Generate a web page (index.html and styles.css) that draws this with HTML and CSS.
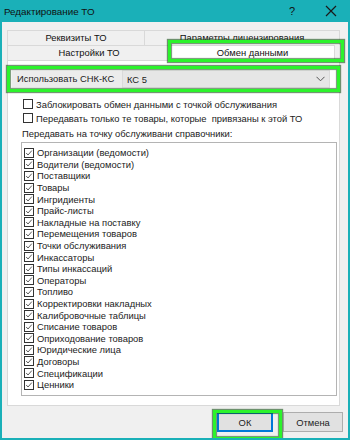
FILE: index.html
```html
<!DOCTYPE html>
<html lang="ru">
<head>
    <meta charset="UTF-8">
    <title>Редактирование ТО</title>
    <link rel="stylesheet" href="styles.css">
</head>
<body>
    <div class="window">
        <div class="titlebar">
            <span class="title">Редактирование ТО</span>
            <span class="help">?</span>
            <svg class="close" width="12" height="12" viewBox="0 0 12 12">
                <path d="M1 1 L11 11 M11 1 L1 11" stroke="#1a1a1a" stroke-width="1.2" fill="none"/>
            </svg>
        </div>

        <div class="content">
            <div class="tabs">
                <div class="tab-row">
                    <div class="tab tab-req">Реквизиты ТО</div>
                    <div class="tab tab-lic">Параметры лицензирования</div>
                </div>
                <div class="tab-row">
                    <div class="tab tab-set">Настройки ТО</div>
                    <div class="tab tab-active">Обмен данными</div>
                </div>
            </div>

            <div class="panel">
                <div class="combo-row">
                    <span class="combo-label">Использовать СНК-КС</span>
                    <div class="combo">
                        <span>КС 5</span>
                        <svg width="9" height="6" viewBox="0 0 9 6">
                            <path d="M0.5 0.8 L4.5 4.8 L8.5 0.8" stroke="#555" stroke-width="1" fill="none"/>
                        </svg>
                    </div>
                </div>

                <div class="option"><span class="cb"></span>Заблокировать обмен данными с точкой обслуживания</div>
                <div class="option"><span class="cb"></span>Передавать только те товары, которые&nbsp; привязаны к этой ТО</div>

                <div class="list-title">Передавать на точку обслуживани справочники:</div>

                <div class="listbox" id="listbox"></div>
            </div>

            <div class="buttons">
                <button class="btn btn-default">ОК</button>
                <button class="btn">Отмена</button>
            </div>
        </div>

        <div class="mark mark-tab"></div>
        <div class="mark mark-combo"></div>
        <div class="mark mark-ok"></div>
    </div>

    <script>
        const items = [
            'Организации (ведомости)',
            'Водители (ведомости)',
            'Поставщики',
            'Товары',
            'Ингридиенты',
            'Прайс-листы',
            'Накладные на поставку',
            'Перемещения товаров',
            'Точки обслуживания',
            'Инкассаторы',
            'Типы инкассаций',
            'Операторы',
            'Топливо',
            'Корректировки накладных',
            'Калибровочные таблицы',
            'Списание товаров',
            'Оприходование товаров',
            'Юридические лица',
            'Договоры',
            'Спецификации',
            'Ценники'
        ];

        const tick = '<svg width="10" height="10" viewBox="0 0 10 10"><path d="M1.5 5 L3.8 7.5 L8.5 2" stroke="#333" stroke-width="1" fill="none"/></svg>';
        const listbox = document.getElementById('listbox');

        items.forEach(name => {
            listbox.innerHTML += `<div class="item"><span class="cb">${tick}</span>${name}</div>`;
        });
    </script>
</body>
</html>
```

FILE: styles.css
```css
* {
    box-sizing: border-box;
}
body {
    margin: 0;
    font-family: "Liberation Sans", Arial, sans-serif;
    font-size: 9.4px;
    color: #000;
    background-color: #f0f0f0;
}
.window {
    position: relative;
    width: 350px;
    height: 440px;
    border: 2px solid #1ab0b8;
    border-top: none;
    background-color: #f0f0f0;
    overflow: hidden;
}
.titlebar {
    height: 22px;
    margin: 0 -2px;
    background-color: #1ab0b8;
    display: flex;
    align-items: center;
    padding-left: 4px;
}
.title {
    font-size: 9.8px;
    color: #111;
    flex: 1;
}
.help {
    font-size: 11px;
    color: #111;
    margin-right: 30px;
}
.close {
    margin-right: 13px;
}
.content {
    padding: 8px 0 0 5px;
}
.tab-row {
    display: flex;
    height: 15px;
    width: 333px;
}
.tab {
    border: 1px solid #d9d9d9;
    border-bottom: none;
    background-color: #f0f0f0;
    text-align: center;
    line-height: 14px;
    color: #111;
}
.tab-req {
    width: 138px;
}
.tab-lic {
    flex: 1;
    border-left: none;
}
.tab-set {
    width: 164px;
}
.tab-active {
    width: 164px;
    background-color: #fff;
    border-left: none;
}
.panel {
    width: 333px;
    height: 346px;
    background-color: #fff;
    border: 1px solid #d9d9d9;
    padding: 9px 0 0 4px;
}
.combo-row {
    display: flex;
    width: 318px;
    height: 18px;
    background-color: #ececec;
}
.combo-label {
    width: 110px;
    line-height: 18px;
    padding-left: 5px;
    color: #222;
}
.combo {
    flex: 1;
    display: flex;
    align-items: center;
    justify-content: space-between;
    padding: 0 4px 0 4px;
    background-color: #e6e6e6;
    border: 1px solid #dadada;
    color: #222;
}
.option {
    display: flex;
    align-items: center;
    height: 14px;
    padding-left: 11px;
    color: #222;
}
.combo-row + .option {
    margin-top: 9px;
}
.cb {
    width: 10px;
    height: 10px;
    border: 1px solid #333;
    background-color: #fff;
    margin-right: 3px;
    display: flex;
    align-items: center;
    justify-content: center;
    flex-shrink: 0;
}
.cb svg {
    display: block;
}
.list-title {
    margin-top: 2px;
    padding-left: 10px;
    height: 13px;
    line-height: 13px;
    color: #222;
}
.listbox {
    margin: 2px 0 0 9px;
    width: 316px;
    height: 254px;
    border: 1px solid #b4b4b4;
    padding: 4px 0 0 2px;
}
.item {
    display: flex;
    align-items: center;
    height: 11.6px;
    color: #222;
}
.buttons {
    display: flex;
    justify-content: flex-end;
    gap: 10px;
    margin-top: 6px;
    padding-right: 5px;
}
.btn {
    width: 60px;
    height: 20px;
    font-family: "Liberation Sans", Arial, sans-serif;
    font-size: 9.4px;
    color: #222;
    background-color: #e1e1e1;
    border: 1px solid #adadad;
    padding: 0;
}
.btn-default {
    width: 56px;
    border: 1px solid #0078d7;
    box-shadow: inset 0 0 0 1px #0078d7;
}
.mark {
    position: absolute;
    border: 3px solid #2cf32c;
    box-shadow: 0 0 1px 1px rgba(20, 80, 20, 0.6), inset 0 0 1px 1px rgba(20, 80, 20, 0.6);
}
.mark-tab {
    left: 166px;
    top: 40px;
    width: 176px;
    height: 22px;
}
.mark-combo {
    left: 5px;
    top: 66px;
    width: 333px;
    height: 26px;
}
.mark-ok {
    left: 211px;
    top: 410px;
    width: 69px;
    height: 30px;
}
```
